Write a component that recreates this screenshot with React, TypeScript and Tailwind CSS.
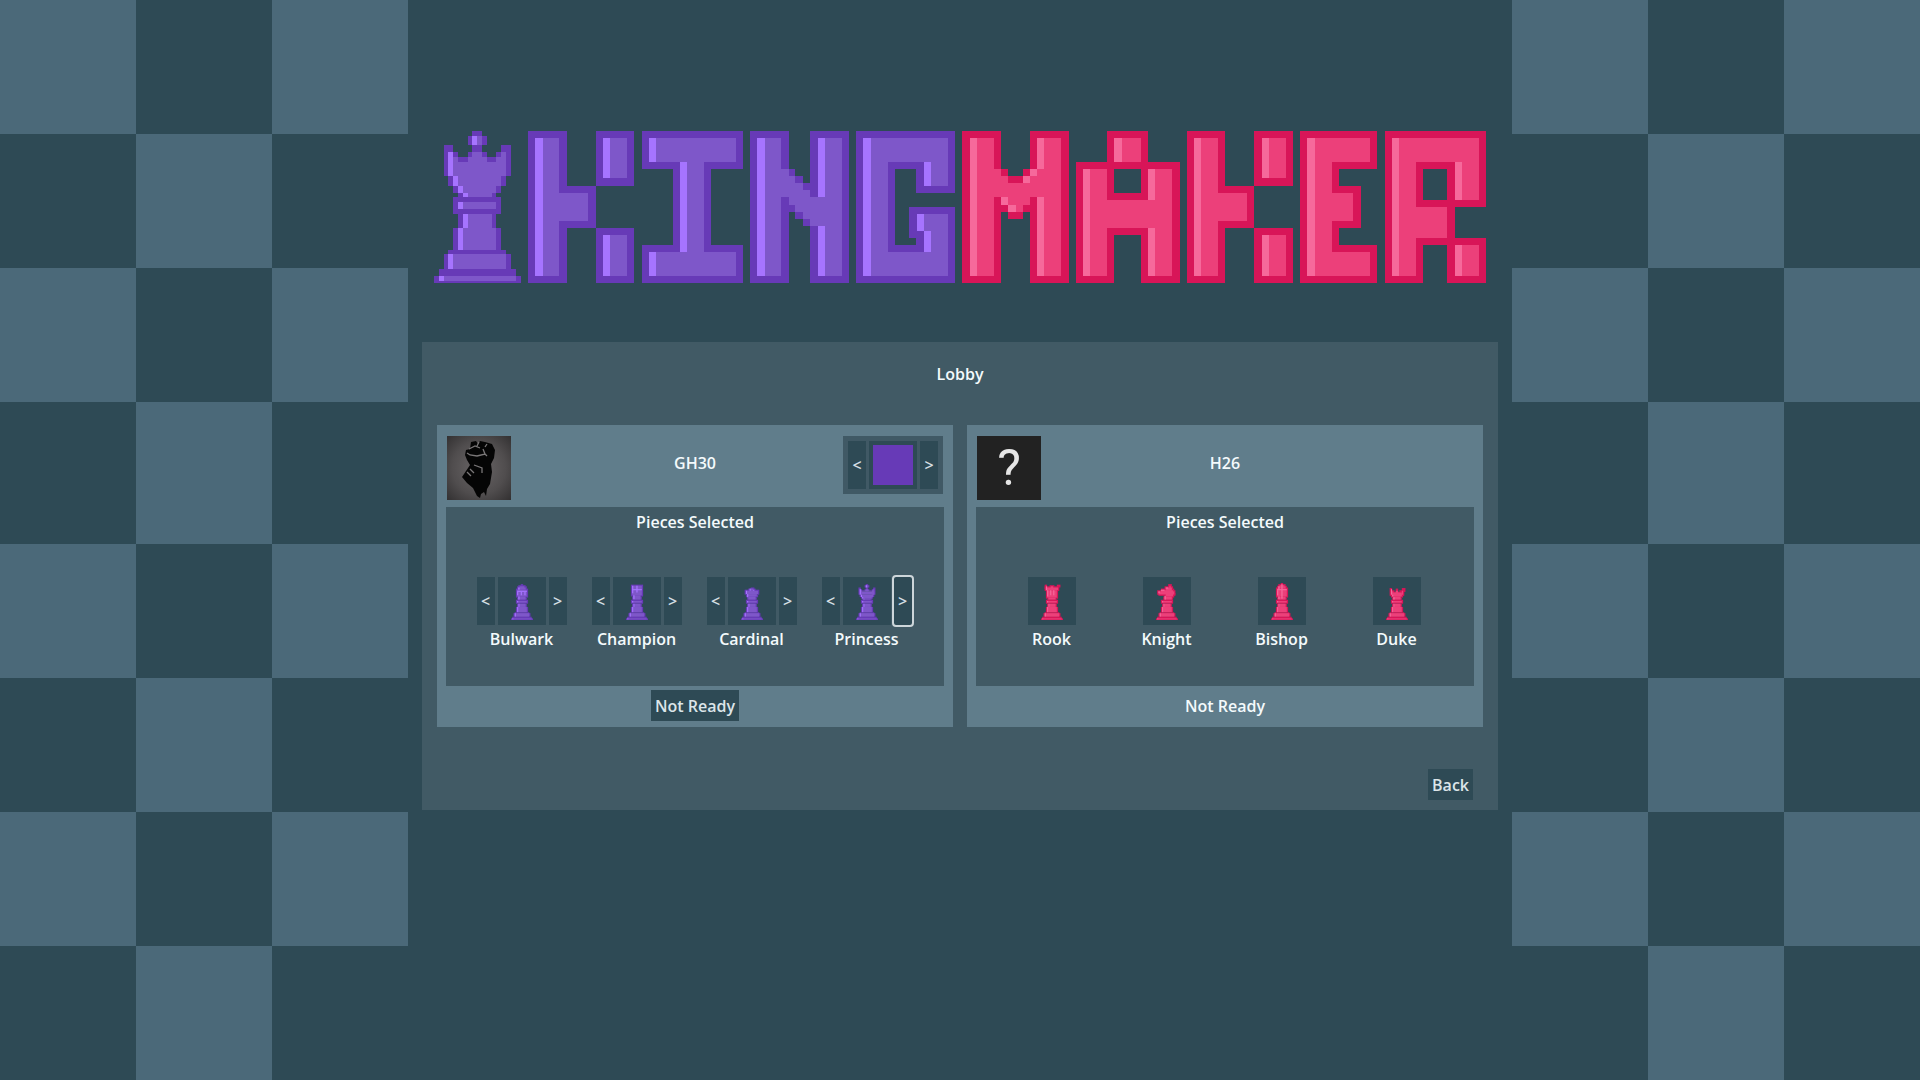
import React from 'react';

type Box = [number, number, number, number];

type Sprite = {
  edge: Box[];
  fill: Box[];
  shine: Box[];
};

const purple = { edge: '#673ab7', fill: '#7e57c9', shine: '#a674ff' };
const pink = { edge: '#d81558', fill: '#ec407a', shine: '#f6699b' };

// every box is x1, y1, x2, y2
const stand: Sprite = {
  edge: [
    [86, 232, 230, 282], [100, 282, 215, 323], [86, 323, 230, 390], [71, 390, 244, 402],
    [57, 402, 258, 447], [42, 447, 273, 489], [28, 468, 288, 489],
  ],
  fill: [[115, 247, 215, 268], [129, 282, 201, 323], [115, 323, 215, 390], [86, 402, 244, 447], [57, 468, 273, 482]],
  shine: [[100, 247, 115, 268], [115, 282, 129, 323], [100, 323, 115, 390], [71, 402, 86, 447], [42, 468, 57, 482]],
};

const heads: Record<string, Sprite> = {
  Princess: {
    edge: [
      [143, 33, 172, 118], [129, 47, 186, 76], [57, 76, 86, 168], [230, 76, 258, 168], [86, 97, 100, 125],
      [215, 97, 230, 125], [100, 111, 129, 125], [186, 111, 215, 125], [129, 97, 186, 118],
      [71, 168, 244, 197], [86, 197, 230, 218], [100, 218, 215, 232],
    ],
    fill: [
      [158, 47, 172, 76], [143, 97, 172, 125], [129, 111, 186, 125], [86, 111, 100, 168], [230, 97, 244, 168],
      [215, 111, 230, 168], [86, 125, 244, 168], [100, 168, 230, 197], [115, 197, 215, 218], [129, 218, 201, 232],
    ],
    shine: [[143, 47, 158, 76], [71, 97, 86, 168], [86, 168, 100, 197], [100, 197, 115, 218], [115, 218, 129, 232]],
  },
  Cardinal: {
    edge: [
      [143, 76, 186, 104], [114, 90, 201, 118], [71, 104, 244, 168], [86, 168, 230, 200], [100, 200, 215, 232],
    ],
    fill: [[143, 90, 172, 118], [86, 118, 230, 160], [100, 160, 215, 190], [114, 190, 201, 232]],
    shine: [[129, 90, 143, 118], [86, 118, 100, 160], [100, 160, 114, 200], [172, 104, 186, 118]],
  },
  Bulwark: {
    edge: [[143, 33, 172, 61], [114, 47, 201, 76], [100, 61, 215, 104], [86, 90, 230, 204], [100, 204, 215, 232]],
    fill: [[129, 61, 186, 90], [114, 76, 201, 104], [100, 104, 215, 190], [114, 190, 201, 232]],
    shine: [[114, 76, 129, 104], [100, 118, 215, 132], [100, 132, 114, 175], [143, 132, 157, 175], [186, 132, 200, 175], [114, 190, 129, 232]],
  },
  Champion: {
    edge: [[86, 40, 230, 190], [100, 190, 215, 232]],
    fill: [[100, 54, 215, 175], [114, 175, 201, 232]],
    shine: [[150, 54, 165, 140], [100, 97, 215, 111], [100, 54, 114, 150], [114, 175, 129, 225]],
  },
  Rook: {
    edge: [[71, 40, 100, 97], [129, 47, 186, 97], [215, 40, 258, 76], [71, 61, 244, 120], [86, 120, 230, 218], [100, 218, 215, 232]],
    fill: [[86, 76, 230, 111], [100, 111, 215, 204], [143, 61, 172, 97], [114, 204, 201, 232]],
    shine: [[86, 61, 100, 111], [100, 111, 114, 190], [136, 111, 150, 175], [172, 111, 186, 175]],
  },
  Knight: {
    edge: [
      [172, 33, 215, 76], [129, 61, 230, 104], [86, 90, 244, 132], [42, 111, 258, 168],
      [57, 147, 258, 182], [129, 168, 244, 204], [114, 190, 230, 232],
    ],
    fill: [[186, 54, 201, 90], [143, 76, 215, 118], [86, 111, 230, 147], [57, 125, 244, 165], [143, 147, 230, 190], [129, 190, 215, 232]],
    shine: [[57, 125, 71, 147], [86, 104, 129, 118], [143, 76, 172, 90], [129, 182, 143, 232]],
  },
  Bishop: {
    edge: [[143, 19, 172, 47], [114, 33, 201, 76], [100, 54, 215, 90], [86, 76, 230, 204], [100, 204, 215, 232]],
    fill: [[129, 47, 186, 76], [114, 61, 201, 90], [100, 90, 215, 190], [114, 190, 201, 232]],
    shine: [[150, 33, 165, 218], [100, 97, 215, 111], [100, 111, 114, 175], [114, 61, 129, 97], [114, 190, 129, 225]],
  },
  Duke: {
    edge: [
      [71, 83, 100, 182], [215, 83, 258, 132], [143, 90, 172, 132], [86, 111, 129, 182], [186, 111, 244, 182],
      [86, 132, 230, 204], [100, 204, 215, 232],
    ],
    fill: [[100, 125, 114, 175], [143, 118, 172, 147], [215, 118, 230, 168], [100, 140, 215, 190], [114, 190, 201, 232]],
    shine: [[86, 97, 100, 168], [100, 168, 114, 190], [114, 200, 129, 232]],
  },
};

const titleLeft: Sprite = {
  edge: [
    [310, 33, 426, 489], [403, 197, 513, 323], [513, 33, 627, 197], [513, 323, 627, 489],
    [651, 33, 955, 147], [651, 375, 955, 489], [745, 127, 859, 395],
    [975, 33, 1093, 489], [1155, 33, 1272, 489], [1093, 147, 1112, 275], [1112, 168, 1134, 296], [1134, 189, 1155, 318],
    [1293, 33, 1410, 489], [1293, 33, 1590, 147], [1475, 33, 1590, 218], [1293, 375, 1590, 489],
    [1475, 262, 1590, 489], [1452, 262, 1475, 355],
  ],
  fill: [
    [330, 54, 403, 468], [403, 218, 490, 303], [535, 54, 606, 175], [535, 345, 606, 468],
    [672, 54, 933, 126], [672, 395, 933, 468], [766, 126, 837, 395],
    [996, 54, 1069, 468], [1179, 54, 1252, 468], [1069, 147, 1093, 231], [1093, 168, 1112, 254],
    [1112, 189, 1134, 275], [1134, 210, 1155, 296], [1155, 231, 1179, 318],
    [1314, 54, 1389, 468], [1314, 54, 1569, 126], [1497, 126, 1569, 198], [1314, 395, 1569, 468],
    [1497, 282, 1569, 468], [1476, 282, 1518, 333],
  ],
  shine: [
    [330, 54, 355, 468], [535, 54, 555, 175], [535, 345, 555, 468],
    [672, 54, 693, 126], [672, 395, 693, 468], [766, 126, 787, 395],
    [996, 54, 1021, 468], [1179, 54, 1200, 231], [1179, 318, 1200, 468],
    [1314, 54, 1339, 468], [1497, 126, 1518, 198], [1476, 282, 1497, 333], [1497, 333, 1518, 395],
  ],
};

const titleRight: Sprite = {
  edge: [
    [1611, 33, 1728, 489], [1815, 33, 1933, 489], [1728, 147, 1749, 275], [1749, 168, 1794, 297], [1794, 147, 1815, 275],
    [2047, 33, 2169, 147], [1953, 126, 2067, 489], [2148, 126, 2265, 489], [2047, 126, 2169, 147], [2047, 218, 2169, 346],
    [2286, 33, 2400, 489], [2379, 197, 2487, 323], [2487, 33, 2604, 197], [2487, 323, 2604, 489],
    [2625, 33, 2742, 489], [2625, 33, 2856, 147], [2721, 197, 2808, 323], [2625, 375, 2856, 489],
    [2880, 33, 2994, 489], [2880, 33, 3183, 147], [3065, 33, 3183, 261], [2973, 240, 3090, 375], [3066, 354, 3183, 489],
  ],
  fill: [
    [1635, 54, 1707, 468], [1835, 54, 1909, 468], [1707, 147, 1728, 231], [1728, 168, 1749, 254],
    [1749, 189, 1794, 275], [1794, 168, 1815, 254], [1815, 147, 1835, 231],
    [2067, 54, 2148, 126], [1974, 147, 2047, 468], [2169, 147, 2241, 468], [2047, 240, 2169, 323],
    [2307, 54, 2379, 468], [2379, 218, 2466, 303], [2511, 54, 2583, 175], [2511, 345, 2583, 468],
    [2646, 54, 2721, 468], [2646, 54, 2835, 126], [2721, 218, 2784, 303], [2646, 395, 2835, 468],
    [2901, 54, 2973, 468], [2901, 54, 3162, 126], [3090, 126, 3162, 240], [2973, 261, 3066, 354], [3090, 375, 3162, 468],
  ],
  shine: [
    [1635, 54, 1656, 468], [1835, 54, 1858, 147], [1815, 147, 1835, 168], [1794, 168, 1815, 189],
    [1835, 231, 1858, 468], [1728, 231, 1749, 254], [1749, 254, 1772, 275],
    [2067, 54, 2091, 126], [1974, 147, 1995, 468], [2169, 147, 2190, 240], [2169, 323, 2190, 468],
    [2307, 54, 2328, 468], [2511, 54, 2532, 175], [2511, 345, 2532, 468],
    [2646, 54, 2670, 468],
    [2901, 54, 2922, 468], [3090, 126, 3111, 240], [3090, 375, 3111, 468],
  ],
};

const tiles = Array.from({ length: 24 }, (_, i) => (Math.floor(i / 3) + (i % 3)) % 2 === 0);

type BlocksProps = {
  sprite: Sprite;
  colors: typeof purple;
};

const Blocks = ({ sprite, colors }: BlocksProps) => (
  <>
    {(['edge', 'fill', 'shine'] as const).map((layer) =>
      sprite[layer].map(([x1, y1, x2, y2], i) => (
        <rect key={layer + i} x={x1} y={y1} width={x2 - x1} height={y2 - y1} fill={colors[layer]} />
      ))
    )}
  </>
);

const Logo = () => (
  <svg viewBox="28 33 3155 456" className="w-full" role="img" aria-label="Kingmaker" shapeRendering="crispEdges">
    <Blocks sprite={heads.Princess} colors={purple} />
    <Blocks sprite={stand} colors={purple} />
    <Blocks sprite={titleLeft} colors={purple} />
    <Blocks sprite={titleRight} colors={pink} />
  </svg>
);

const Board = () => (
  <div className="grid w-[21.25%] shrink-0 grid-cols-3 grid-rows-[134fr_134fr_134fr_142fr_134fr_134fr_134fr_134fr]">
    {tiles.map((light, i) => (
      <div key={i} className={light ? 'bg-[#4b6979]' : ''} />
    ))}
  </div>
);

const ArrowButton = ({ label, children, focused }: { label: string; children: string; focused?: boolean }) => (
  <button
    aria-label={label}
    className={`flex h-12 w-[18px] items-center justify-center bg-[#2e4a55] text-[#d5dfe3] ${
      focused ? 'rounded-xs outline-2 outline-[#cdd6da]' : ''
    }`}
  >
    {children}
  </button>
);

const Piece = ({ name, colors }: { name: string; colors: typeof purple }) => (
  <div className="flex h-12 w-12 items-center justify-center bg-[#2e4a55]">
    <svg viewBox="28 19 260 470" className="h-[37px] w-[22px]" preserveAspectRatio="none" aria-hidden="true">
      <Blocks sprite={heads[name]} colors={colors} />
      <Blocks sprite={stand} colors={colors} />
    </svg>
  </div>
);

const FistAvatar = () => (
  <svg viewBox="0 0 64 64" className="h-16 w-16" role="img" aria-label="GH30 avatar">
    <defs>
      <radialGradient id="smoke" cx="50%" cy="50%" r="70%">
        <stop offset="0%" stopColor="#6a6667" />
        <stop offset="60%" stopColor="#504d4e" />
        <stop offset="100%" stopColor="#333132" />
      </radialGradient>
    </defs>
    <rect width="64" height="64" fill="url(#smoke)" />
    <path
      d="M24 6 L29 5 L31 8 L33 5 L38 6 L45 8 L48 14 L47 22 L44 28 L45 36 L43 48 L40 53 L39 60 L37 56 L34 58 L33 62 L30 60 L26 52 L20 47 L15 41 L19 35 L23 29 L20 24 L18 19 L19 14 L23 13 Z"
      fill="#050505"
    />
    <path
      d="M20 17 L23 19 L30 20 L38 18 L40 20 M38 18 L36 13 M22 13 L28 10 L33 12 M30 10 L32 6 M38 11 L40 8 M27 29 L35 32 L35 37 M23 33 L27 37 M20 36 L24 40"
      fill="none"
      stroke="#7a7778"
      strokeWidth="1.3"
    />
  </svg>
);

const UnknownAvatar = () => (
  <div className="flex h-16 w-16 items-center justify-center bg-[#222222] font-[Roboto] text-[50px] font-normal text-[#e6e6e6]">
    ?
  </div>
);

const ColorPicker = () => (
  <div className="flex gap-[3px] bg-[#405965] p-[5px]">
    <ArrowButton label="Previous color">{'<'}</ArrowButton>
    <div className="h-12 w-12 bg-[#2e4a55] p-1">
      <div className="h-full bg-[#673ab7]" />
    </div>
    <ArrowButton label="Next color">{'>'}</ArrowButton>
  </div>
);

type PlayerProps = {
  name: string;
  pieces: string[];
  colors: typeof purple;
  local?: boolean;
};

const Player = ({ name, pieces, colors, local }: PlayerProps) => (
  <section className="bg-[#607d8b]">
    <div className="grid h-[82px] grid-cols-[1fr_auto_1fr] items-start px-[10px] pt-[11px]">
      {local ? <FistAvatar /> : <UnknownAvatar />}
      <h2 className="pt-[15px]">{name}</h2>
      <div className="flex justify-end">{local && <ColorPicker />}</div>
    </div>

    <div className="mx-[9px] bg-[#415a65] pt-[3px] pb-[35px] text-center">
      <h3>Pieces Selected</h3>
      <div className="mt-[43px] flex justify-center pr-[2px]">
        {pieces.map((piece) => (
          <div key={piece} className="flex w-[115px] flex-col items-center gap-[2px]">
            <div className="flex gap-[3px]">
              {local && <ArrowButton label={`Previous piece before ${piece}`}>{'<'}</ArrowButton>}
              <Piece name={piece} colors={colors} />
              {local && (
                <ArrowButton label={`Next piece after ${piece}`} focused={piece === 'Princess'}>
                  {'>'}
                </ArrowButton>
              )}
            </div>
            <p>{piece}</p>
          </div>
        ))}
      </div>
    </div>

    <div className="flex justify-center pt-1 pb-[6px]">
      {local ? (
        <button className="h-[31px] bg-[#2e4a55] px-1 text-[#dce5e9]">Not Ready</button>
      ) : (
        <p className="h-[31px] pt-1">Not Ready</p>
      )}
    </div>
  </section>
);

const App = () => {
  return (
    <div className="flex min-h-screen bg-[#2e4a55] font-['Open_Sans','Noto_Sans',sans-serif] text-base font-semibold text-[#f4fafc]">
      <Board />

      <main className="flex-1 px-[14px] pt-[131px]">
        <h1 className="px-3">
          <Logo />
        </h1>

        <div className="mt-[59px] bg-[#415a65] px-[15px] pt-5 pb-[10px]">
          <h2 className="text-center">Lobby</h2>

          <div className="mt-[39px] grid grid-cols-2 gap-[14px]">
            <Player name="GH30" pieces={['Bulwark', 'Champion', 'Cardinal', 'Princess']} colors={purple} local />
            <Player name="H26" pieces={['Rook', 'Knight', 'Bishop', 'Duke']} colors={pink} />
          </div>

          <div className="mt-[42px] flex justify-end pr-[10px]">
            <button className="h-[31px] bg-[#2e4a55] px-1 text-[#dce5e9]">Back</button>
          </div>
        </div>
      </main>

      <Board />
    </div>
  );
};

export default App;
